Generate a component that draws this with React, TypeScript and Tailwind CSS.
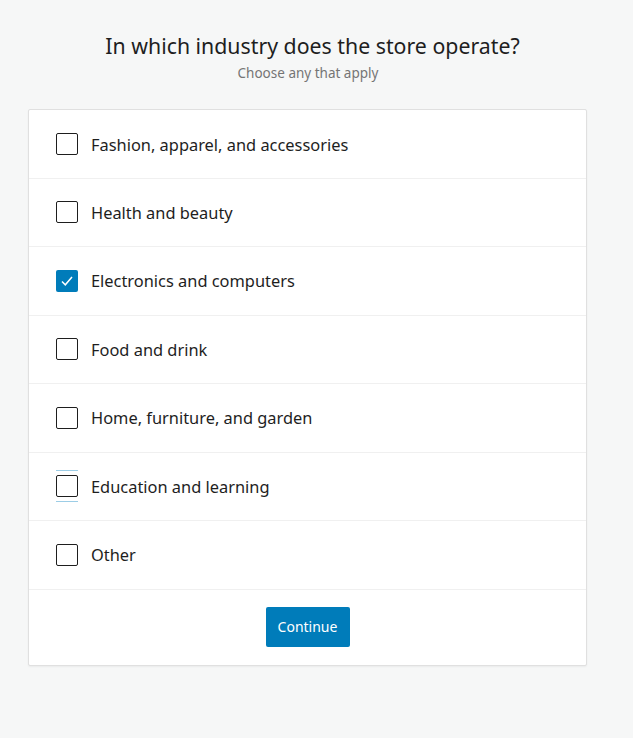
import React, { useState } from "react";

const industries = [
  "Fashion, apparel, and accessories",
  "Health and beauty",
  "Electronics and computers",
  "Food and drink",
  "Home, furniture, and garden",
  "Education and learning",
  "Other",
];

const Checkbox = ({ checked, focused }: { checked: boolean; focused?: boolean }) => (
  <div className="relative w-[22px] h-[22px] shrink-0">
    {focused ? (
      <>
        <div className="absolute left-0 right-0 -top-[5px] h-px bg-[#9ccde6]" />
        <div className="absolute left-0 right-0 -bottom-[5px] h-px bg-[#9ccde6]" />
      </>
    ) : null}
    {checked ? (
      <div className="w-[22px] h-[22px] rounded-[2px] bg-[#007cba] flex items-center justify-center">
        <svg width="16" height="16" viewBox="0 0 16 16" fill="none">
          <path d="M3 8.5 L6.3 11.8 L13 4" stroke="white" strokeWidth="1.5" />
        </svg>
      </div>
    ) : (
      <div className="w-[22px] h-[22px] rounded-[2px] border-[1.5px] border-[#1e1e1e] bg-white" />
    )}
  </div>
);

export default function App() {
  const [selected, setSelected] = useState<string[]>(["Electronics and computers"]);

  const toggle = (name: string) => {
    setSelected((s) => (s.includes(name) ? s.filter((x) => x != name) : [...s, name]));
  };

  return (
    <div className="min-h-[738px] bg-[#f6f7f7] font-['Noto_Sans',sans-serif] text-[#1e1e1e]">
      <div className="w-[616px] pt-[31px]">
        <h1 className="text-center text-[21.3px] leading-[30px] pl-[9px]">In which industry does the store operate?</h1>
        <p className="text-center text-[13.5px] text-[#757575] mt-[3px] leading-[18px]">Choose any that apply</p>
        <div className="mx-[28px] mt-[27px] w-[559px] bg-white border border-[#e0e0e0] rounded-[2px] shadow-[0_1px_2px_rgba(0,0,0,0.05)]">
          {industries.map((name, index) => (
            <div
              key={name}
              onClick={() => toggle(name)}
              className={`flex items-center gap-[13px] pl-[27px] h-[68.5px] border-b border-[#f0f0f0] cursor-pointer ${
                index == 0 ? "pt-px" : ""
              }`}
            >
              <Checkbox checked={selected.includes(name)} focused={name == "Education and learning"} />
              <span className="text-[16.4px] pt-[2px]">{name}</span>
            </div>
          ))}
          <div className="flex justify-center pt-[17px] pb-[18px]">
            <button className="w-[84px] h-[40px] bg-[#007cba] text-white text-[14px] rounded-[2px]">Continue</button>
          </div>
        </div>
      </div>
    </div>
  );
}
